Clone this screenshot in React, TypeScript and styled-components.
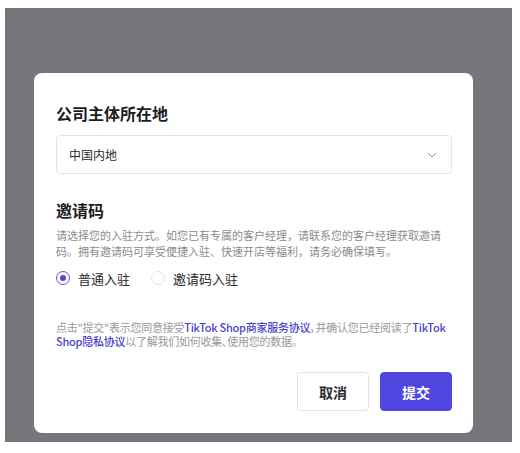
import React, { useState } from 'react';
import styled, { createGlobalStyle } from 'styled-components';

const GlobalStyle = createGlobalStyle`
  html, body {
    margin: 0;
    padding: 0;
    background: #fff;
  }
  body {
    font-family: "Noto Sans CJK SC", "Noto Sans", sans-serif;
    color: #1f1f1f;
  }
`;

const Overlay = styled.div`
  box-sizing: border-box;
  width: 507px;
  height: 434px;
  margin: 8px 0 0 5px;
  padding: 65px 0 0 29px;
  background: #75777d;
`;

const Modal = styled.div`
  box-sizing: border-box;
  width: 439px;
  height: 360px;
  padding: 28px 21px 22px 22px;
  background: #fff;
  border-radius: 8px;
  display: flex;
  flex-direction: column;
`;

const Heading = styled.h2`
  margin: 0;
  font-size: 16px;
  line-height: 24px;
  font-weight: 700;
  color: #1c1c1e;
`;

const Select = styled.div`
  box-sizing: border-box;
  height: 39px;
  margin-top: 10px;
  padding: 0 14px 0 12px;
  border: 1px solid #e4e4e6;
  border-radius: 4px;
  display: flex;
  align-items: center;
  justify-content: space-between;
  font-size: 12px;
  color: #2a2a2a;
`;

const Section = styled.div`
  margin-top: 24px;
`;

const Desc = styled.p`
  margin: 5px 0 0;
  max-width: 390px;
  font-size: 11px;
  line-height: 16px;
  color: #8b8b8f;
`;

const RadioGroup = styled.div`
  display: flex;
  align-items: center;
  gap: 21px;
  margin-top: 9px;
  height: 20px;
`;

const RadioLabel = styled.label`
  display: flex;
  align-items: center;
  gap: 8px;
  font-size: 13px;
  color: #2a2a2a;
  cursor: pointer;
`;

const RadioDot = styled.span<{ $checked: boolean }>`
  box-sizing: border-box;
  width: 14px;
  height: 14px;
  border-radius: 50%;
  border: 1px solid ${p => (p.$checked ? '#5b50e0' : '#e6e6e8')};
  display: flex;
  align-items: center;
  justify-content: center;
  &::after {
    content: '';
    width: 6px;
    height: 6px;
    border-radius: 50%;
    background: #5046e0;
    display: ${p => (p.$checked ? 'block' : 'none')};
  }
`;

const Notice = styled.p`
  margin: 32px 0 0;
  font-size: 11px;
  line-height: 14px;
  letter-spacing: -0.25px;
  font-feature-settings: "palt";
  color: #98989c;
`;

const Link = styled.a`
  color: #4c3fce;
  font-weight: 500;
  text-decoration: none;
`;

const Footer = styled.div`
  margin-top: auto;
  display: flex;
  justify-content: flex-end;
  gap: 11px;
`;

const Button = styled.button<{ $primary?: boolean }>`
  box-sizing: border-box;
  width: 72px;
  height: 39px;
  border-radius: 4px;
  font-family: inherit;
  font-size: 14px;
  font-weight: 700;
  cursor: pointer;
  border: 1px solid ${p => (p.$primary ? '#5046e0' : '#e4e4e6')};
  background: ${p => (p.$primary ? '#5046e0' : '#fff')};
  color: ${p => (p.$primary ? '#fff' : '#2a2a2a')};
`;

const Chevron = () => (
  <svg width="10" height="6" viewBox="0 0 10 6" fill="none">
    <path d="M1 1l4 4 4-4" stroke="#9a9a9e" strokeWidth="1" />
  </svg>
);

const options = ['普通入驻', '邀请码入驻'];

export default function App() {
  const [mode, setMode] = useState(0);

  return (
    <>
      <GlobalStyle />
      <Overlay>
        <Modal>
          <Heading>公司主体所在地</Heading>
          <Select>
            <span>中国内地</span>
            <Chevron />
          </Select>
          <Section>
            <Heading>邀请码</Heading>
            <Desc>
              请选择您的入驻方式。如您已有专属的客户经理，请联系您的客户经理获取邀请码。拥有邀请码可享受便捷入驻、快速开店等福利，请务必确保填写。
            </Desc>
            <RadioGroup>
              {options.map((label, i) => (
                <RadioLabel key={label} onClick={() => setMode(i)}>
                  <RadioDot $checked={mode === i} />
                  {label}
                </RadioLabel>
              ))}
            </RadioGroup>
          </Section>
          <Notice>
            点击"提交"表示您同意接受<Link>TikTok Shop商家服务协议</Link>，并确认您已经阅读了<Link>TikTok Shop隐私协议</Link>以了解我们如何收集、使用您的数据。
          </Notice>
          <Footer>
            <Button>取消</Button>
            <Button $primary>提交</Button>
          </Footer>
        </Modal>
      </Overlay>
    </>
  );
}
